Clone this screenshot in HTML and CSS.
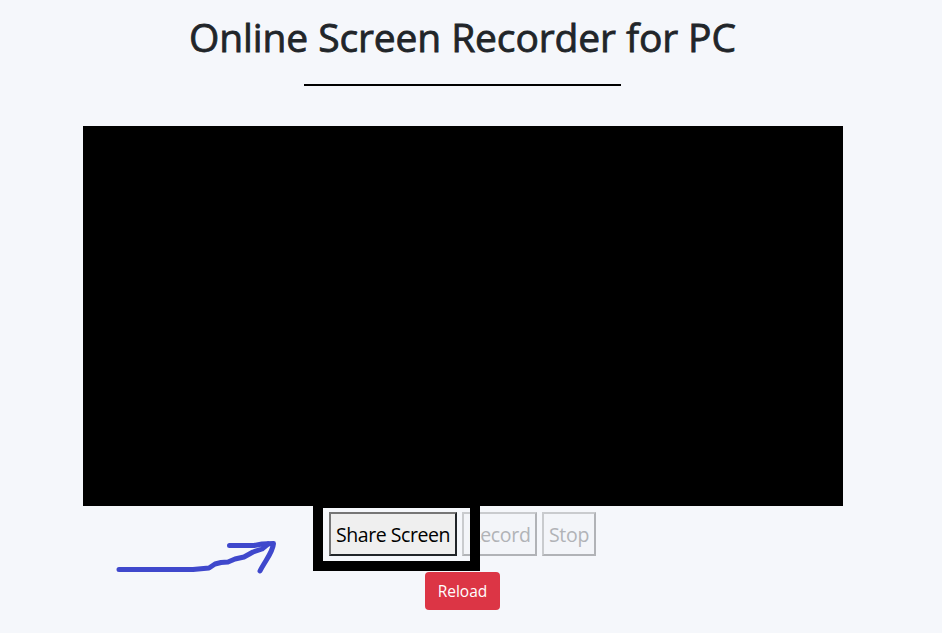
FILE: index.html
```html
<!DOCTYPE html>
<html lang="en">
<head>
<meta charset="utf-8">
<title>Online Screen Recorder for PC</title>
<link rel="stylesheet" href="styles.css">
</head>
<body>
<main class="page">
  <h1 class="title"><span class="title-text">Online Screen Recorder for PC</span></h1>
  <div class="rule"></div>
  <div class="video"></div>
  <div class="controls">
    <button class="control share"><span>Share Screen</span></button>
    <button class="control record" disabled><span>Record</span></button>
    <button class="control stop" disabled><span>Stop</span></button>
    <div class="highlight"></div>
  </div>
  <button class="reload"><span>Reload</span></button>
  <svg class="arrow" width="170" height="44" viewBox="110 535 170 44" fill="none" stroke="#3f48cc" stroke-width="5" stroke-linecap="round" stroke-linejoin="round">
    <path d="M119 569.5H193L209 568L215 564L221 562.5L228 562L235 559L244 557L253 552L262 549L268 544"/>
    <path d="M229.500 545.500H254L262 544L273.500 543.500C273 552 265 561 260 571"/>
  </svg>
</main>
</body>
</html>
```
FILE: styles.css
```css
* { box-sizing: border-box; }
body {
  margin: 0;
  background: #f5f7fb;
  color: #212529;
  font-family: "Segoe UI", "Open Sans", "Noto Sans", sans-serif;
  overflow: hidden;
}
.page {
  position: relative;
  width: 925px;
  height: 633px;
  padding-top: 13px;
  display: flex;
  flex-direction: column;
  align-items: center;
}
.title {
  margin: 0;
  height: 48px;
  font-size: 39px;
  line-height: 48px;
  font-weight: 400;
  letter-spacing: -0.12px;
  -webkit-text-stroke: 0.8px #212529;
  white-space: nowrap;
}
.rule {
  width: 317px;
  height: 2px;
  margin-top: 23px;
  background: #000;
}
.video {
  width: 760px;
  height: 380px;
  margin-top: 40px;
  background: #000;
}
.controls {
  position: relative;
  display: flex;
  gap: 5px;
  margin-top: 6px;
}
.control {
  height: 44px;
  padding: 2px 0 0;
  border: 2px solid;
  border-color: #767676 #212529 #212529 #767676;
  background: #efefef;
  color: #000;
  font-family: inherit;
  font-size: 19.5px;
  font-weight: 400;
  letter-spacing: -0.45px;
  line-height: 38px;
  white-space: nowrap;
}
.control:disabled {
  border-color: #c9cbce #b1b3b7 #b1b3b7 #c9cbce;
  background: #f3f5f9;
  color: #b1b3b7;
}
.control.record { letter-spacing: -0.3px; }
.control.stop { letter-spacing: -0.3px; }
.share { width: 128px; }
.record { width: 75px; }
.stop { width: 54px; }
.highlight {
  position: absolute;
  left: -16px;
  top: -14px;
  width: 167px;
  height: 73px;
  border: 10px solid #000;
}
.reload {
  width: 75px;
  height: 38px;
  margin-top: 16px;
  padding: 0;
  border: 0;
  border-radius: 4px;
  background: #dc3545;
  color: #fff;
  font-family: inherit;
  font-size: 15.5px;
  line-height: 38px;
}
.arrow {
  position: absolute;
  left: 110px;
  top: 535px;
}
```
